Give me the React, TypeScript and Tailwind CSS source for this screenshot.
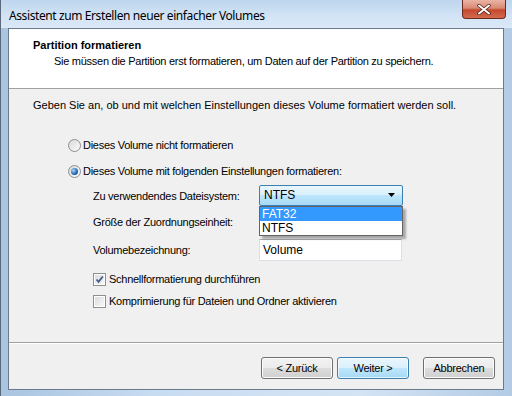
import React from "react";

const font = { fontFamily: '"Liberation Sans", Arial, sans-serif' };

function Radio({ checked }: { checked?: boolean }) {
  return (
    <div className="w-[13px] h-[13px] rounded-full border border-[#8f8f8f] bg-[linear-gradient(135deg,#d9d9d9,#fbfbfb)] flex items-center justify-center shrink-0">
      {checked && (
        <div className="w-[7px] h-[7px] rounded-full bg-[radial-gradient(circle_at_35%_35%,#a6d8f8,#1f63b5_60%,#0d3a7a)]" />
      )}
    </div>
  );
}

function Checkbox({ checked }: { checked?: boolean }) {
  return (
    <div className="w-[13px] h-[13px] border border-[#8e8f8f] bg-white p-[1px] shrink-0">
      <div className="w-full h-full bg-[linear-gradient(135deg,#dcdcdc,#f7f7f7)] flex items-center justify-center">
        {checked && (
          <svg width="9" height="9" viewBox="0 0 9 9">
            <path d="M1.5 4.5 L3.6 6.8 L7.8 1.5" fill="none" stroke="#3f5b8f" strokeWidth="1.8" />
          </svg>
        )}
      </div>
    </div>
  );
}

function Button({ label, def }: { label: string; def?: boolean }) {
  return (
    <div
      className={
        "w-[72px] h-[22px] rounded-[3px] border flex items-center justify-center text-[11px] tracking-[-0.25px] text-black " +
        (def
          ? "border-[#3c7fb1] bg-[linear-gradient(#eaf6fd_0%,#d9f0fc_50%,#bee6fd_51%,#a7d9f5_100%)] shadow-[inset_0_0_0_1px_#ffffffb0]"
          : "border-[#707070] bg-[linear-gradient(#f2f2f2_0%,#ebebeb_50%,#dddddd_51%,#cfcfcf_100%)] shadow-[inset_0_0_0_1px_#fcfcfc]")
      }
    >
      {label}
    </div>
  );
}

export default function App() {
  return (
    <div
      className="w-[512px] h-[396px] overflow-hidden flex flex-col bg-[linear-gradient(90deg,#a9c4e0,#c8dcf1_30%,#d4e4f5_70%,#b3cbe4)] border-l border-[#5a6a7c]"
      style={font}
    >
      {/* Title bar */}
      <div className="h-[28px] shrink-0 flex items-start justify-between pl-[8px] pr-[6px] bg-[linear-gradient(#bed6ee,#d3e4f5_60%,#dae8f7)]">
        <div
          className="mt-[7px] text-[12px] tracking-[-0.4px] text-black"
          style={{ fontFamily: '"Noto Sans", "Liberation Sans", sans-serif' }}
        >
          Assistent zum Erstellen neuer einfacher Volumes
        </div>
        <div className="w-[44px] h-[19px] rounded-b-[4px] border border-t-0 border-[#6b2a20] bg-[linear-gradient(#eab3a4,#d98a74_45%,#c3492f_55%,#d46a4c)] flex items-center justify-center">
          <svg width="14" height="11" viewBox="0 0 14 11">
            <path d="M2 1.5 L12 9.5 M12 1.5 L2 9.5" stroke="#4a1a12" strokeWidth="3.4" strokeLinecap="round" />
            <path d="M2 1.5 L12 9.5 M12 1.5 L2 9.5" stroke="#ffffff" strokeWidth="2" strokeLinecap="round" />
          </svg>
        </div>
      </div>

      {/* Client area */}
      <div className="ml-[7px] mr-[8px] h-[362px] shrink-0 border border-[#6a7a8c] flex flex-col bg-[#f0f0f0]">
        {/* Header */}
        <div className="h-[60px] bg-white border-b border-[#a0a0a0] shrink-0 pl-[24px] pt-[10px]">
          <div className="text-[11px] font-bold text-black leading-[13px]">Partition formatieren</div>
          <div className="text-[11px] tracking-[-0.27px] text-black leading-[13px] mt-[3px] pl-[21px]">
            Sie müssen die Partition erst formatieren, um Daten auf der Partition zu speichern.
          </div>
        </div>

        {/* Content */}
        <div className="h-[254px] shrink-0 relative text-[11px] tracking-[-0.27px] text-black leading-[13px] border-b border-[#a0a0a0]">
          <div className="pl-[24px] pt-[10px] tracking-normal">
            Geben Sie an, ob und mit welchen Einstellungen dieses Volume formatiert werden soll.
          </div>

          <div className="pl-[59px] mt-[26px] flex items-center gap-[2px] h-[14px]">
            <Radio />
            <span>Dieses Volume nicht formatieren</span>
          </div>
          <div className="pl-[59px] mt-[12px] flex items-center gap-[2px] h-[14px]">
            <Radio checked />
            <span>Dieses Volume mit folgenden Einstellungen formatieren:</span>
          </div>

          <div className="pl-[84px] mt-[7px] flex flex-col">
            <div className="flex items-center h-[22px]">
              <div className="w-[166px]">Zu verwendendes Dateisystem:</div>
              <div className="relative -mt-[2px]">
                <div className="w-[144px] h-[21px] border border-[#3c7fb1] rounded-[2px] bg-[linear-gradient(#eaf6fd_0%,#d9f0fc_45%,#bee6fd_50%,#a7d9f5_100%)] flex items-center justify-between pl-[4px] pr-[7px]">
                  <span className="text-[12px] tracking-normal">NTFS</span>
                  <svg width="7" height="4" viewBox="0 0 7 4">
                    <path d="M0 0 H7 L3.5 4 Z" fill="#000" />
                  </svg>
                </div>
                <div className="absolute left-0 top-[21px] w-[144px] z-10 border border-[#646464] bg-white shadow-[3px_3px_2px_rgba(0,0,0,0.3)]">
                  <div className="h-[14px] bg-[#3399ff] text-white text-[12px] tracking-normal leading-[14px] pl-[2px]">FAT32</div>
                  <div className="h-[14px] text-[12px] tracking-normal leading-[14px] pl-[2px]">NTFS</div>
                </div>
              </div>
            </div>
            <div className="flex items-center h-[22px] mt-[4px]">
              <div className="w-[166px]">Größe der Zuordnungseinheit:</div>
              <div className="w-[143px] h-[21px] border border-[#abadb3] bg-white" />
            </div>
            <div className="flex items-center h-[22px] mt-[6px]">
              <div className="w-[166px]">Volumebezeichnung:</div>
              <div className="w-[143px] h-[22px] border border-[#dbdfe6] border-t-[#abadb3] bg-white flex items-center pl-[3px] text-[12px] tracking-normal">
                Volume
              </div>
            </div>
          </div>

          <div className="pl-[84px] mt-[11px] flex items-center gap-[3px] h-[14px]">
            <Checkbox checked />
            <span>Schnellformatierung durchführen</span>
          </div>
          <div className="pl-[84px] mt-[8px] flex items-center gap-[3px] h-[14px]">
            <Checkbox />
            <span>Komprimierung für Dateien und Ordner aktivieren</span>
          </div>
        </div>

        {/* Footer */}
        <div className="flex-1 border-t border-white flex items-start justify-end pt-[13px] pr-[8px]">
          <Button label="< Zurück" />
          <div className="ml-[4px]">
            <Button label="Weiter >" def />
          </div>
          <div className="ml-[14px]">
            <Button label="Abbrechen" />
          </div>
        </div>
      </div>
    </div>
  );
}
